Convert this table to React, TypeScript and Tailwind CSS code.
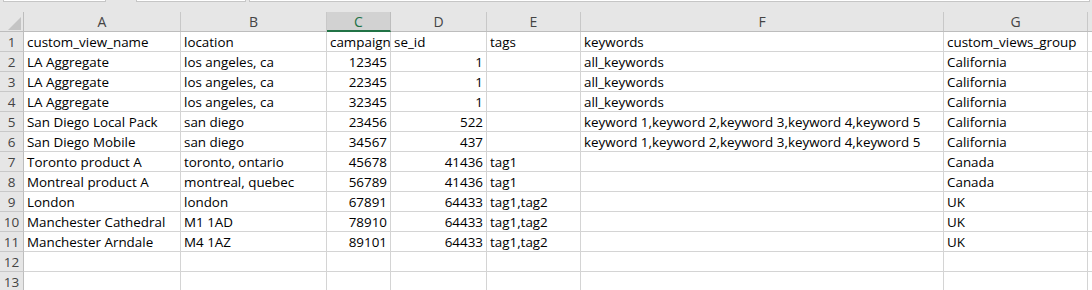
import React from "react";

const widths = [157, 146, 64, 96, 94, 363, 144];
const letters = ["A", "B", "C", "D", "E", "F", "G"];

const kw = "keyword 1,keyword 2,keyword 3,keyword 4,keyword 5";
const rows: string[][] = [
  ["custom_view_name", "location", "campaign_id", "se_id", "tags", "keywords", "custom_views_group"],
  ["LA Aggregate", "los angeles, ca", "12345", "1", "", "all_keywords", "California"],
  ["LA Aggregate", "los angeles, ca", "22345", "1", "", "all_keywords", "California"],
  ["LA Aggregate", "los angeles, ca", "32345", "1", "", "all_keywords", "California"],
  ["San Diego Local Pack", "san diego", "23456", "522", "", kw, "California"],
  ["San Diego Mobile", "san diego", "34567", "437", "", kw, "California"],
  ["Toronto product A", "toronto, ontario", "45678", "41436", "tag1", "", "Canada"],
  ["Montreal product A", "montreal, quebec", "56789", "41436", "tag1", "", "Canada"],
  ["London", "london", "67891", "64433", "tag1,tag2", "", "UK"],
  ["Manchester Cathedral", "M1 1AD", "78910", "64433", "tag1,tag2", "", "UK"],
  ["Manchester Arndale", "M4 1AZ", "89101", "64433", "tag1,tag2", "", "UK"],
  ["", "", "", "", "", "", ""],
  ["", "", "", "", "", "", ""],
];

export default function App() {
  return (
    <div
      className="w-[1092px] h-[290px] overflow-hidden bg-white text-black"
      style={{ fontFamily: '"Open Sans", "Noto Sans", sans-serif' }}
    >
      {/* top strip */}
      <div className="h-[12px] bg-[#e6e6e6] flex items-start">
        <div className="ml-[3px] w-[103px] h-[2px] bg-white border-b border-x border-[#c6c6c6]" />
        <div className="ml-[30px] w-[110px] h-[2px] bg-white border-b border-x border-[#c6c6c6]" />
        <div className="ml-[3px] w-[841px] h-[2px] bg-white border-b border-x border-[#c6c6c6]" />
      </div>
      {/* column header */}
      <div className="flex h-[20px] bg-[#e6e6e6] border-b border-[#bdbdbd]">
        <div className="w-[24px] shrink-0 border-r border-[#bdbdbd] relative">
          <svg className="absolute left-[8px] top-[5px]" width="13" height="13" viewBox="0 0 13 13">
            <polygon points="13,0 13,13 0,13" fill="#c4c4c4" />
          </svg>
        </div>
        {widths.map((w, i) => (
          <div
            key={i}
            style={{ width: w }}
            className={
              i === 2
                ? "shrink-0 flex items-center justify-center text-[14px] bg-[#d2d2d2] text-[#217346] border-r border-[#bdbdbd] border-b-2 border-b-[#217346] -mb-px"
                : "shrink-0 flex items-center justify-center text-[14px] text-[#444] border-r border-[#c8c8c8]"
            }
          >
            {letters[i]}
          </div>
        ))}
        <div className="flex-1" />
      </div>
      {/* body */}
      {rows.map((r, ri) => (
        <div key={ri} className="flex h-[20px] border-b border-[#d4d4d4]">
          <div className="w-[24px] shrink-0 bg-[#e6e6e6] border-r border-[#bdbdbd] flex items-center justify-center pt-[1px] text-[13.5px] text-[#444] -mb-px border-b border-b-[#c8c8c8]">
            {ri + 1}
          </div>
          {widths.map((w, ci) => {
            const num = ri > 0 && (ci === 2 || ci === 3);
            return (
              <div
                key={ci}
                style={{ width: w }}
                className={
                  "shrink-0 border-r border-[#d4d4d4] overflow-hidden whitespace-nowrap flex items-end px-[3px] text-[13.4px] leading-[18px] " +
                  (num ? "justify-end" : "justify-start")
                }
              >
                {r[ci]}
              </div>
            );
          })}
          <div className="flex-1" />
        </div>
      ))}
    </div>
  );
}
